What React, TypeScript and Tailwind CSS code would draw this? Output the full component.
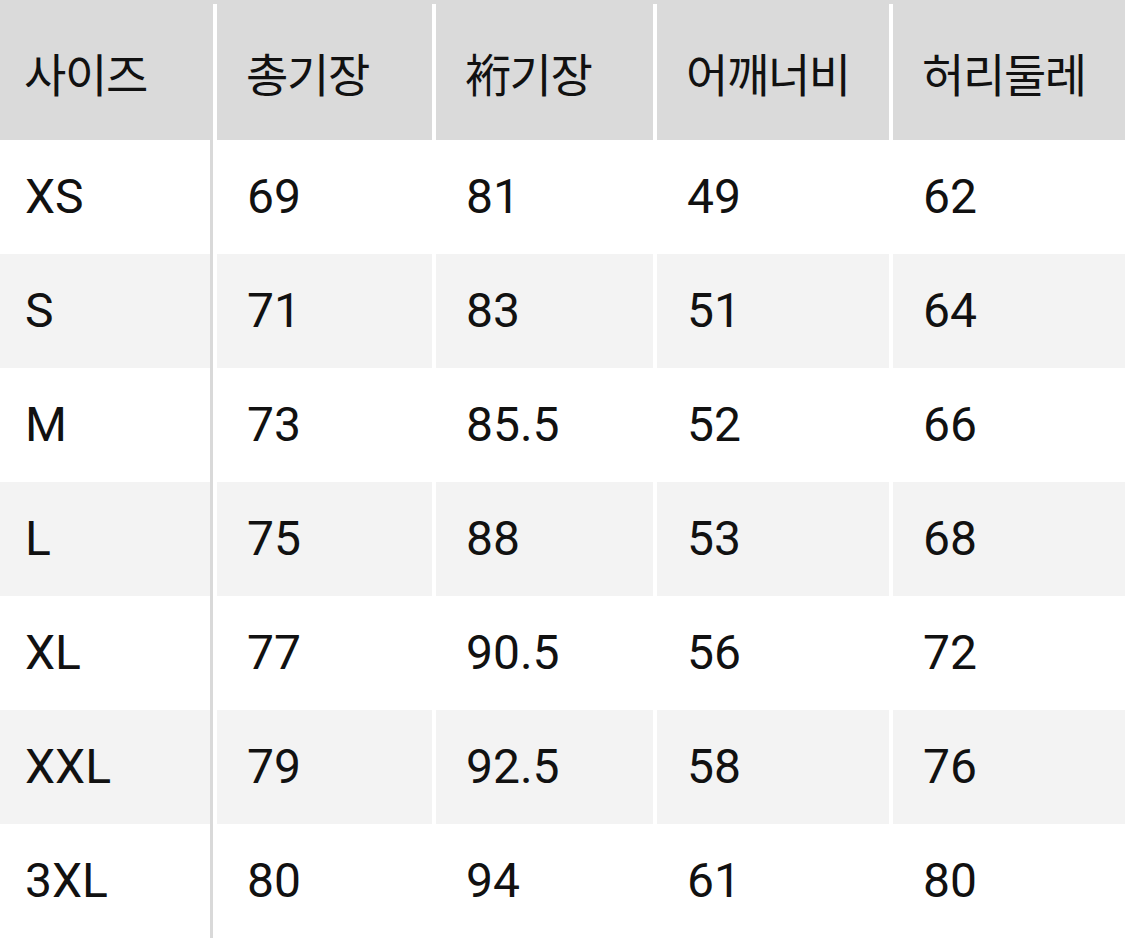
const headers = ['사이즈', '총기장', '裄기장', '어깨너비', '허리둘레'];

const rows = [
  ['XS', '69', '81', '49', '62'],
  ['S', '71', '83', '51', '64'],
  ['M', '73', '85.5', '52', '66'],
  ['L', '75', '88', '53', '68'],
  ['XL', '77', '90.5', '56', '72'],
  ['XXL', '79', '92.5', '58', '76'],
  ['3XL', '80', '94', '61', '80'],
];

const gridCols = 'grid grid-cols-[213px_215px_217px_232px_1fr] gap-x-[4px]';

export default function App() {
  return (
    <div className="w-[1125px] h-[939px] overflow-hidden bg-white text-[#111]">
      <div className="h-[4px] bg-[#dadada]" />
      <div className={`${gridCols} h-[136px]`}>
        {headers.map((h, i) => (
          <div
            key={h}
            className={`flex items-center bg-[#dadada] font-['Noto_Sans_CJK_KR',sans-serif] text-[46px] tracking-[-0.03em] ${
              i === 0 ? 'pl-[24px]' : 'pl-[29px]'
            }`}
          >
            {h}
          </div>
        ))}
      </div>
      {rows.map((row, r) => {
        const bg = r % 2 === 1 ? 'bg-[#f3f3f3]' : 'bg-white';
        return (
          <div key={row[0]} className={`${gridCols} h-[114px]`}>
            {row.map((cell, i) => (
              <div
                key={i}
                className={`flex items-center font-['Roboto',sans-serif] text-[48px] ${bg} ${
                  i === 0
                    ? 'pl-[25px] border-r-[3px] border-[#d9d9d9]'
                    : 'pl-[30px]'
                }`}
              >
                {cell}
              </div>
            ))}
          </div>
        );
      })}
    </div>
  );
}
